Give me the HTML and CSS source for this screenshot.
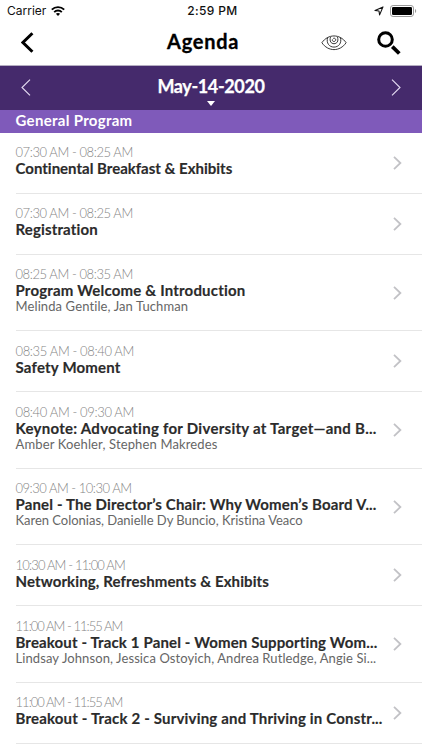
FILE: index.html
```html
<!DOCTYPE html>
<html lang="en">
<head>
<meta charset="utf-8">
<title>Agenda</title>
<link rel="stylesheet" href="styles.css">
</head>
<body>
<svg class="defs" width="0" height="0"><defs><symbol id="chev" viewBox="0 0 9 14"><path d="M1 .8 7.4 7 1 13.2" fill="none" stroke="#c2c2c6" stroke-width="1.8"/></symbol></defs></svg>
<div class="status">
  <div class="carrier"><span>Carrier</span>
    <svg width="14" height="10" viewBox="0 0 14 10"><g fill="none" stroke="#000" stroke-width="1.9"><path d="M.8 3.7C4.2.3 9.8.3 13.2 3.7"/><path d="M3.2 6.1c2.1-2.1 5.5-2.1 7.6 0"/></g><path d="M7 10 4.9 7.8c1.2-1.1 3-1.1 4.2 0z"/></svg>
  </div>
  <div class="clock">2:59 PM</div>
  <div class="power">
    <svg width="10" height="10" viewBox="0 0 10 10"><path d="M9 .9 5.6 8.9 5 5 1 4.5z" fill="none" stroke="#111" stroke-width="1.1" stroke-linejoin="round"/></svg>
    <svg width="27" height="12" viewBox="0 0 27 12"><rect x=".5" y=".5" width="23" height="11" rx="2.6" fill="none" stroke="#999"/><rect x="2" y="2" width="20" height="8" rx="1.3"/><path d="M25 4c1.6.6 1.6 3.4 0 4z" fill="#999"/></svg>
  </div>
</div>
<header class="nav">
  <svg class="back" width="14" height="21" viewBox="0 0 14 21"><path d="M11.4 1.2 1.9 10.5l9.5 9.3" fill="none" stroke="#000" stroke-width="3"/></svg>
  <h1>Agenda</h1>
  <div class="tools">
    <svg width="26" height="17" viewBox="0 0 26 17" fill="none" stroke="#222" stroke-width=".9"><path d="M.9 8.7C7-.3 19-.3 25.1 8.7 19 17.9 7 17.9.9 8.7z"/><path d="M6.7 3.4c-1.8 5.6 1.6 9.7 6.3 9.7s8.1-4.1 6.3-9.7"/><path d="M9.6 3.1c-1.5 4.1.6 6.6 3.4 6.6s4.9-2.5 3.4-6.6"/><path d="M12.2 4.4c2.2-1 3.5 1.9 1.6 2.9-1.6.7-2.9-.5-2.4-1.9"/></svg>
    <svg width="24" height="24" viewBox="0 0 24 24" fill="none" stroke="#000"><circle cx="8.5" cy="8.5" r="6.8" stroke-width="3"/><path d="m15.3 15.6 7 6.9" stroke-width="3.8"/></svg>
  </div>
</header>
<div class="datebar">
  <svg width="10" height="17" viewBox="0 0 10 17"><path d="M9 .6 1 8.5l8 7.9" fill="none" stroke="#e6def3" stroke-width="1.1"/></svg>
  <div class="date">May-14-2020<i></i></div>
  <svg width="10" height="17" viewBox="0 0 10 17"><path d="m1 .6 8 7.9-8 7.9" fill="none" stroke="#e6def3" stroke-width="1.1"/></svg>
</div>
<h2 class="section">General Program</h2>
<main>
  <article><div class="time">07:30 AM - 08:25 AM</div><h3 class="t1">Continental Breakfast &amp; Exhibits</h3><svg class="go"><use href="#chev"/></svg></article>
  <article><div class="time">07:30 AM - 08:25 AM</div><h3 class="t2">Registration</h3><svg class="go"><use href="#chev"/></svg></article>
  <article class="tall"><div class="time">08:25 AM - 08:35 AM</div><h3 class="t3">Program Welcome &amp; Introduction</h3><p class="p3">Melinda Gentile, Jan Tuchman</p><svg class="go"><use href="#chev"/></svg></article>
  <article><div class="time wide">08:35 AM - 08:40 AM</div><h3 class="t4">Safety Moment</h3><svg class="go"><use href="#chev"/></svg></article>
  <article class="tall"><div class="time wide">08:40 AM - 09:30 AM</div><h3 class="t5">Keynote: Advocating for Diversity at Target—and B...</h3><p class="p5">Amber Koehler, Stephen Makredes</p><svg class="go"><use href="#chev"/></svg></article>
  <article class="tall"><div class="time one">09:30 AM - 10:30 AM</div><h3 class="t6">Panel - The Director’s Chair: Why Women’s Board V...</h3><p class="p6">Karen Colonias, Danielle Dy Buncio, Kristina Veaco</p><svg class="go"><use href="#chev"/></svg></article>
  <article><div class="time three">10:30 AM - 11:00 AM</div><h3 class="t7">Networking, Refreshments &amp; Exhibits</h3><svg class="go"><use href="#chev"/></svg></article>
  <article class="tall"><div class="time four">11:00 AM - 11:55 AM</div><h3 class="t8">Breakout - Track 1 Panel - Women Supporting Wom...</h3><p class="p8">Lindsay Johnson, Jessica Ostoyich, Andrea Rutledge, Angie Si...</p><svg class="go"><use href="#chev"/></svg></article>
  <article><div class="time four">11:00 AM - 11:55 AM</div><h3 class="t9">Breakout - Track 2 - Surviving and Thriving in Constr...</h3><svg class="go"><use href="#chev"/></svg></article>
</main>
</body>
</html>
```
FILE: styles.css
```css
* { box-sizing: border-box; margin: 0; padding: 0; }
body { width: 422px; height: 750px; overflow: hidden; background: #fff; font-family: Lato, sans-serif; font-variant-ligatures: none; color: #2b2b2b; }
svg { display: block; flex: none; }
.defs { position: absolute; }
.status { height: 22px; display: grid; grid-template-columns: 1fr auto 1fr; align-items: center; padding: 0 5px 0 7px; font: 12px/22px Inter, sans-serif; color: #111; }
.carrier, .power { display: flex; align-items: center; gap: 6px; }
.carrier { gap: 5px; }
.power { justify-content: flex-end; }
.clock { font-weight: 500; letter-spacing: .35px; padding-left: 1px; }
.nav { height: 43.5px; display: grid; grid-template-columns: 146px 1fr auto; align-items: center; padding: 0 21px 1px; border-bottom: 1px solid #b5aec2; }
.nav h1 { font-size: 20px; line-height: 38px; padding-bottom: 3px; font-weight: 700; letter-spacing: .75px; color: #000; -webkit-text-stroke: .3px #000; }
.tools { display: flex; justify-content: flex-end; align-items: center; gap: 30px; }
.datebar { height: 44.5px; background: #452a6c; display: flex; justify-content: space-between; align-items: center; padding: 0 21px; }
.date { position: relative; font-size: 18px; font-weight: 700; letter-spacing: -.38px; color: #fff; line-height: 40px; padding-bottom: 3px; -webkit-text-stroke: .25px #fff; }
.date i { position: absolute; left: 50%; top: 35px; margin-left: -4px; border: 4px solid transparent; border-top: 5px solid #fff; border-bottom: 0; }
.section { height: 22.6px; background: #7f5aba; color: #fff; font-size: 15px; line-height: 21px; padding-left: 15.5px; font-weight: 700; letter-spacing: .3px; }
article { position: relative; height: 61.1px; margin-left: 15.5px; padding-top: 11.5px; border-bottom: 1px solid #e6e6e6; white-space: nowrap; }
.tall { height: 76.4px; }
.time { font-size: 13px; line-height: 16px; font-weight: 300; color: #858585; letter-spacing: -.42px; }
.wide { letter-spacing: -.36px; }
.one { letter-spacing: -.49px; }
.three { letter-spacing: -.83px; }
.four { letter-spacing: -.97px; }
h3 { font-size: 15px; line-height: 16px; font-weight: 700; -webkit-text-stroke: .15px currentColor; }
.t1 { letter-spacing: 0; }
.t2 { letter-spacing: .15px; }
.t3 { letter-spacing: .19px; }
.t4 { letter-spacing: .2px; }
.t5 { letter-spacing: .27px; }
.t6 { letter-spacing: .15px; }
.t7 { letter-spacing: .11px; }
.t8 { letter-spacing: .14px; }
.t9 { letter-spacing: .18px; }
p { font-size: 13px; line-height: 17px; color: #666; }
.p3 { letter-spacing: .11px; }
.p5 { letter-spacing: .14px; }
.p6 { letter-spacing: -.02px; }
.p8 { letter-spacing: .1px; }
.go { position: absolute; right: 20px; top: 50%; width: 9px; height: 14px; margin-top: -6.8px; }
```
